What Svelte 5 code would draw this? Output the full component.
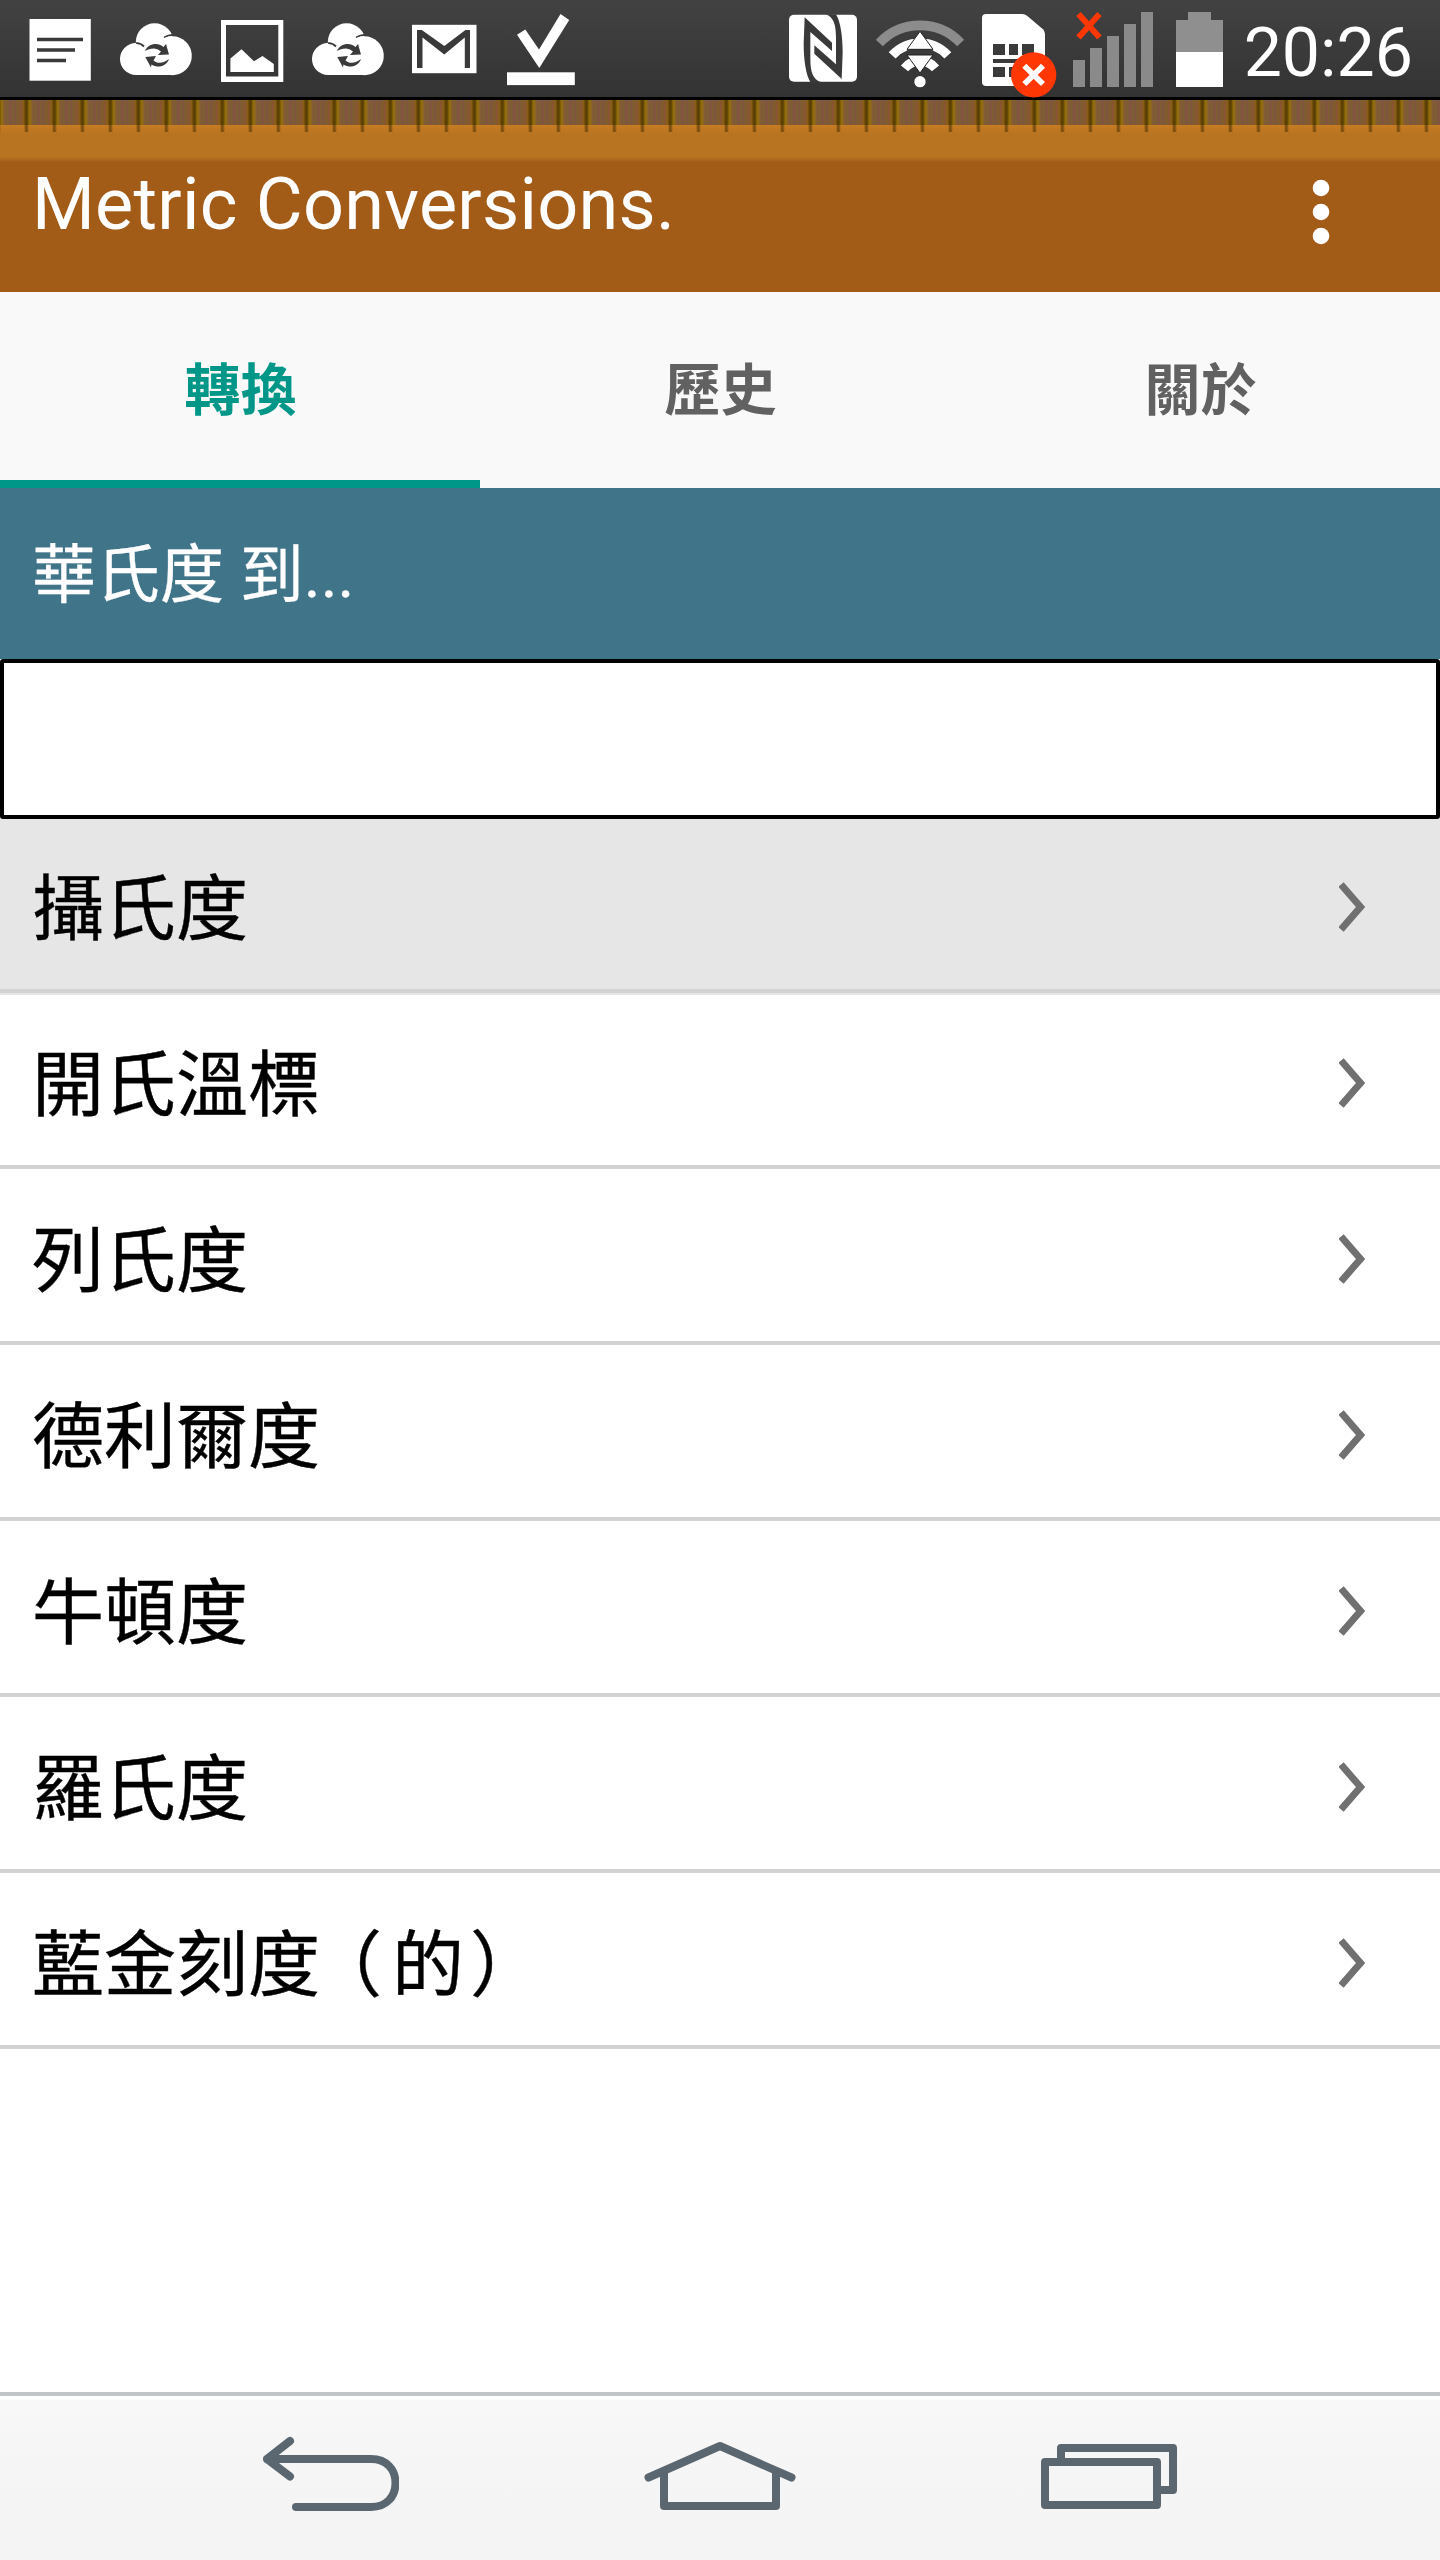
<script lang="ts">
	type Tab = { id: string; label: string };

	const tabs: Tab[] = [
		{ id: 'convert', label: '轉換' },
		{ id: 'history', label: '歷史' },
		{ id: 'about', label: '關於' }
	];

	const units = [
		{ name: '攝氏度' },
		{ name: '開氏溫標' },
		{ name: '列氏度' },
		{ name: '德利爾度' },
		{ name: '牛頓度' },
		{ name: '羅氏度' },
		{ name: '藍金刻度', note: '的' }
	];

	let activeTab = $state('convert');
	let selected = $state(0);
	let amount = $state('');
</script>

{#snippet cloudSync()}
	<svg class="icon" width="72" height="97" viewBox="0 0 72 97" aria-hidden="true">
		<g fill="#fff">
			<circle cx="34.6" cy="42" r="18.8" />
			<circle cx="16" cy="59" r="16" />
			<rect x="15" y="48" width="38" height="27" />
		</g>
		<path d="M16 43.2C18 43 21.500 44 24 46.500" fill="none" stroke="#3a3a3a" stroke-width="1.800" />
		<path d="M44 37.500C47 35.500 50 35 53 35" fill="none" stroke="#3a3a3a" stroke-width="1.800" />
		<circle cx="52.3" cy="55.700" r="19.500" fill="#fff" />
		<g fill="#3a3a3a">
			<path d="M25 51C28 43.500 38 42 43.500 47L46 44L49 54.500L38 55L41 51.500C36 47 30 48 25 51Z" />
			<path d="M49 59C46.500 66.500 38 68.500 31.500 64.500L31 67.500L25.300 57L36 56L33.500 60.500C38 64.500 44 63 49 59Z" />
		</g>
	</svg>
{/snippet}

<div class="screen">
	<header class="status">
		<div class="notices">
			<svg class="icon" width="63" height="97" viewBox="29 0 63 97" aria-hidden="true">
				<rect x="29.500" y="19" width="61.300" height="61.700" fill="#fff" />
				<path d="M37 39.500H83M37 50H75M37 60.500H66" stroke="#3a3a3a" stroke-width="3.500" />
			</svg>
			{@render cloudSync()}
			<svg class="icon" width="64" height="97" viewBox="220 0 64 97" aria-hidden="true">
				<path
					d="M221 20H283.300V82H221ZM226 25V76.500H278.300V25Z"
					fill="#fff"
					fill-rule="evenodd"
				/>
				<path d="M230.400 58.500L241.500 49.300L254 61.300L262.500 56L273.800 64V72H230.400Z" fill="#fff" />
			</svg>
			{@render cloudSync()}
			<svg class="icon" width="65" height="97" viewBox="412 0 65 97" aria-hidden="true">
				<rect x="412" y="24.800" width="64.500" height="48.400" fill="#fff" />
				<path
					d="M417 30H421.800L444.300 46L465.500 30H470V68H464.800V37.500L444.300 54.500L422.500 37.500V68H417Z"
					fill="#3a3a3a"
				/>
			</svg>
			<svg class="icon" width="71" height="97" viewBox="505 0 71 97" aria-hidden="true">
				<rect x="507" y="72.300" width="67.800" height="12.800" fill="#fff" />
				<path d="M517 34.800L525.300 29.500L539 49.500L560.500 14L569.200 20L539.300 68Z" fill="#fff" />
			</svg>
		</div>

		<div class="system">
			<svg class="icon" width="72" height="97" viewBox="24 0 216 291" aria-hidden="true">
				<rect x="27" y="44" width="204" height="201" rx="15" fill="#fff" />
				<g fill="#3a3a3a">
					<path d="M74 52L156 128V153L91 96V175C91 215 98 238 122 246H91C78 226 71 180 71 130Z" />
					<path
						d="M74 52L156 128V153L91 96V175C91 215 98 238 122 246H91C78 226 71 180 71 130Z"
						transform="rotate(180 129.500 144.500)"
					/>
				</g>
			</svg>
			<svg class="icon" width="90" height="97" viewBox="288 0 270 291" aria-hidden="true">
				<path d="M298 129A167 167 0 0 1 542 129" fill="none" stroke="#8c8c8c" stroke-width="29" />
				<path d="M336.500 166A113 113 0 0 1 503.500 166" fill="none" stroke="#fff" stroke-width="28" />
				<path d="M373.500 205A60 60 0 0 1 466.500 205" fill="none" stroke="#fff" stroke-width="28" />
				<rect x="382" y="149" width="76" height="15" fill="#3a3a3a" />
				<path
					d="M420 94L381 148H459ZM420 219L381 165H459Z"
					fill="#fff"
					stroke="#222"
					stroke-width="3"
				/>
				<circle cx="420" cy="245" r="17" fill="#fff" />
			</svg>
			<svg class="icon" width="75" height="97" viewBox="606 0 225 291" aria-hidden="true">
				<path
					d="M618 42H727Q735 42 741 47L789 88Q795 94 795 102V246Q795 258 783 258H618Q606 258 606 246V54Q606 42 618 42Z"
					fill="#fff"
				/>
				<path
					d="M639 132H675V165H639ZM687 132H714V165H687ZM726 132H762V165H726ZM639 177H762V189H639ZM639 201H675V231H639ZM687 201H714V231H687Z"
					fill="#3a3a3a"
				/>
				<circle cx="761" cy="224.500" r="68" fill="#ff3705" />
				<path d="M733 197L789 252M789 197L733 252" stroke="#fff" stroke-width="17" />
			</svg>
			<svg class="icon" width="87" height="97" viewBox="1073 0 87 97" aria-hidden="true">
				<path
					d="M1073 60H1085V87H1073ZM1090 48H1102V87H1090ZM1107 36H1119V87H1107ZM1124 24H1136V87H1124ZM1141 12H1153V87H1141Z"
					fill="#8a8a8a"
				/>
				<path d="M1078.500 14L1099.500 37.500M1099.500 14L1078.500 37.500" stroke="#ff3705" stroke-width="6" />
			</svg>
			<svg class="icon" width="47" height="97" viewBox="1176 0 47 97" aria-hidden="true">
				<path d="M1188 12H1211V20H1223V52H1176V20H1188Z" fill="#8f8f8f" />
				<rect x="1176" y="52" width="47" height="35" fill="#fff" />
			</svg>
			<span class="clock">20:26</span>
		</div>
	</header>

	<div class="appbar">
		<h1>Metric Conversions.</h1>
		<button type="button" class="more" aria-label="More options">
			<svg width="18" height="66" viewBox="0 0 18 66">
				<circle cx="9" cy="9" r="8.300" />
				<circle cx="9" cy="33" r="8.300" />
				<circle cx="9" cy="57" r="8.300" />
			</svg>
		</button>
	</div>

	<nav class="tabs">
		{#each tabs as tab (tab.id)}
			<button
				type="button"
				class="tab"
				class:active={activeTab === tab.id}
				onclick={() => (activeTab = tab.id)}
			>
				{tab.label}
			</button>
		{/each}
	</nav>

	<main>
		<h2>華氏度 到...</h2>
		<input class="amount" type="text" inputmode="decimal" aria-label="華氏度" bind:value={amount} />
		<ul class="units">
			{#each units as unit, i (unit.name)}
				<li>
					<button type="button" class="unit" class:selected={selected === i} onclick={() => (selected = i)}>
						<span class="name"
							>{unit.name}{#if unit.note}<span class="open">（</span>{unit.note}<span class="close">）</span
								>{/if}</span
						>
						<svg width="26" height="50" viewBox="0 0 26 50" aria-hidden="true">
							<path d="M2 2.500L21.500 25L2 47.500" />
						</svg>
					</button>
				</li>
			{/each}
		</ul>
	</main>

	<footer class="navbar">
		<svg width="136" height="80" viewBox="263 2436 136 80" aria-hidden="true">
			<path d="M290 2441L267 2459L290 2476.500M267 2459H371C387 2459 395.500 2470 395.500 2483S387 2507 371 2507H296" />
		</svg>
		<svg width="152" height="80" viewBox="644 2436 152 80" aria-hidden="true">
			<path d="M648.500 2477.500L720 2446L791.500 2477.500M664 2472V2506H776V2472" />
		</svg>
		<svg width="136" height="80" viewBox="1041 2436 136 80" aria-hidden="true">
			<path d="M1061 2459V2448H1173V2490H1160M1045 2462H1157V2505H1045Z" />
		</svg>
	</footer>
</div>

<style>
	:global(body) {
		background: #fff;
	}

	.screen {
		display: flex;
		flex-direction: column;
		width: 1440px;
		height: 2560px;
		overflow: hidden;
		background: #fff;
		font-family: Roboto, 'Noto Sans CJK TC', sans-serif;
	}

	button {
		padding: 0;
		border: 0;
		background: none;
		font: inherit;
		color: inherit;
		cursor: pointer;
	}

	.status {
		display: flex;
		justify-content: space-between;
		box-sizing: border-box;
		height: 100px;
		padding: 0 27px 0 29px;
		border-bottom: 3px solid #000;
		background: linear-gradient(#424242, #333);
	}

	.notices {
		display: flex;
		gap: 28px;
	}

	.system {
		display: flex;
		gap: 16px;
	}

	.icon {
		display: block;
		flex: none;
		overflow: visible;
	}

	.clock {
		width: 174px;
		padding-top: 5px;
		box-sizing: border-box;
		font-size: 68px;
		line-height: 97px;
		text-align: right;
		color: #fff;
	}

	.appbar {
		display: flex;
		align-items: flex-start;
		justify-content: space-between;
		box-sizing: border-box;
		height: 192px;
		padding: 0 110px 0 32px;
		color: #fff;
		background-color: #a35b18;
		background-image:
			linear-gradient(90deg, transparent, rgba(60, 40, 0, 0.6) 2px, rgba(60, 40, 0, 0.5) 3px, transparent 5px),
			linear-gradient(
				90deg,
				#80560f,
				#7a5a08 3px,
				#96700d 6px,
				#80583c 9px,
				#7d6030 12px,
				#845046 14px,
				#7d6030 17px,
				#805440 19px,
				#7d5e2c 22px,
				#8a5434 25px,
				#87600f 28px
			),
			linear-gradient(#c67c22, #b87420 9px, #b87420 32px, #a35b18 37px);
		background-size:
			28px 32px,
			28px 25px,
			100% 37px;
		background-position:
			24px 0,
			24px 0,
			0 25px;
		background-repeat: repeat-x;
	}

	h1 {
		margin: 0;
		padding-top: 63px;
		font-size: 72px;
		font-weight: 400;
		line-height: 84px;
		letter-spacing: 0.25px;
	}

	.more {
		padding-top: 79px;
	}

	.more svg {
		display: block;
		fill: #fff;
	}

	.tabs {
		display: grid;
		grid-template-columns: repeat(3, 1fr);
		height: 196px;
		background: #f9f9f9;
	}

	.tab {
		padding: 0 0 2px 1px;
		border-bottom: 8px solid transparent;
		font-size: 56px;
		font-weight: 700;
		color: #616161;
	}

	.tab.active {
		border-bottom-color: #009688;
		color: #009688;
	}

	h2 {
		margin: 0;
		padding: 2px 0 0 32px;
		height: 169px;
		font-size: 64px;
		font-weight: 400;
		line-height: 171px;
		color: #fff;
		background: #407589;
		-webkit-text-stroke: 0.3px;
	}

	.amount {
		display: block;
		position: relative;
		box-sizing: border-box;
		width: 100%;
		height: 160px;
		padding: 0 33px;
		border: 4px solid #000;
		border-radius: 3px;
		outline: none;
		background: #fff;
		font: inherit;
		font-size: 72px;
	}

	.units {
		list-style: none;
		margin: -2px 0 0;
		padding: 0;
	}

	.unit {
		display: flex;
		align-items: center;
		justify-content: space-between;
		box-sizing: border-box;
		width: 100%;
		height: 176px;
		padding: 8px 75px 0 32px;
		border-bottom: 4px solid #d3d3d3;
		font-size: 72px;
		color: #000;
	}

	.unit.selected {
		background: #e6e6e6;
		box-shadow: 0 2px #e6e6e6;
	}

	.name {
		padding-bottom: 10px;
		-webkit-text-stroke: 0.4px;
	}

	/* half-width cut of the brackets, spaced by hand */
	.open,
	.close {
		font-feature-settings: 'halt';
	}

	.open {
		margin: 0 10px 0 26px;
	}

	.close {
		margin-left: 6px;
	}

	.unit svg {
		fill: none;
		stroke: #707070;
		stroke-width: 7;
	}

	.navbar {
		display: flex;
		justify-content: space-between;
		box-sizing: border-box;
		height: 168px;
		margin-top: auto;
		padding: 40px 263px 0;
		border-top: 4px solid #c0c6c7;
		background: linear-gradient(#fff 3px, #f8f8f8 4px, #f5f5f5 80px, #f4f4f4);
	}

	.navbar svg {
		fill: none;
		stroke: #5b6770;
		stroke-width: 8;
		stroke-linecap: round;
		stroke-linejoin: round;
	}
</style>
